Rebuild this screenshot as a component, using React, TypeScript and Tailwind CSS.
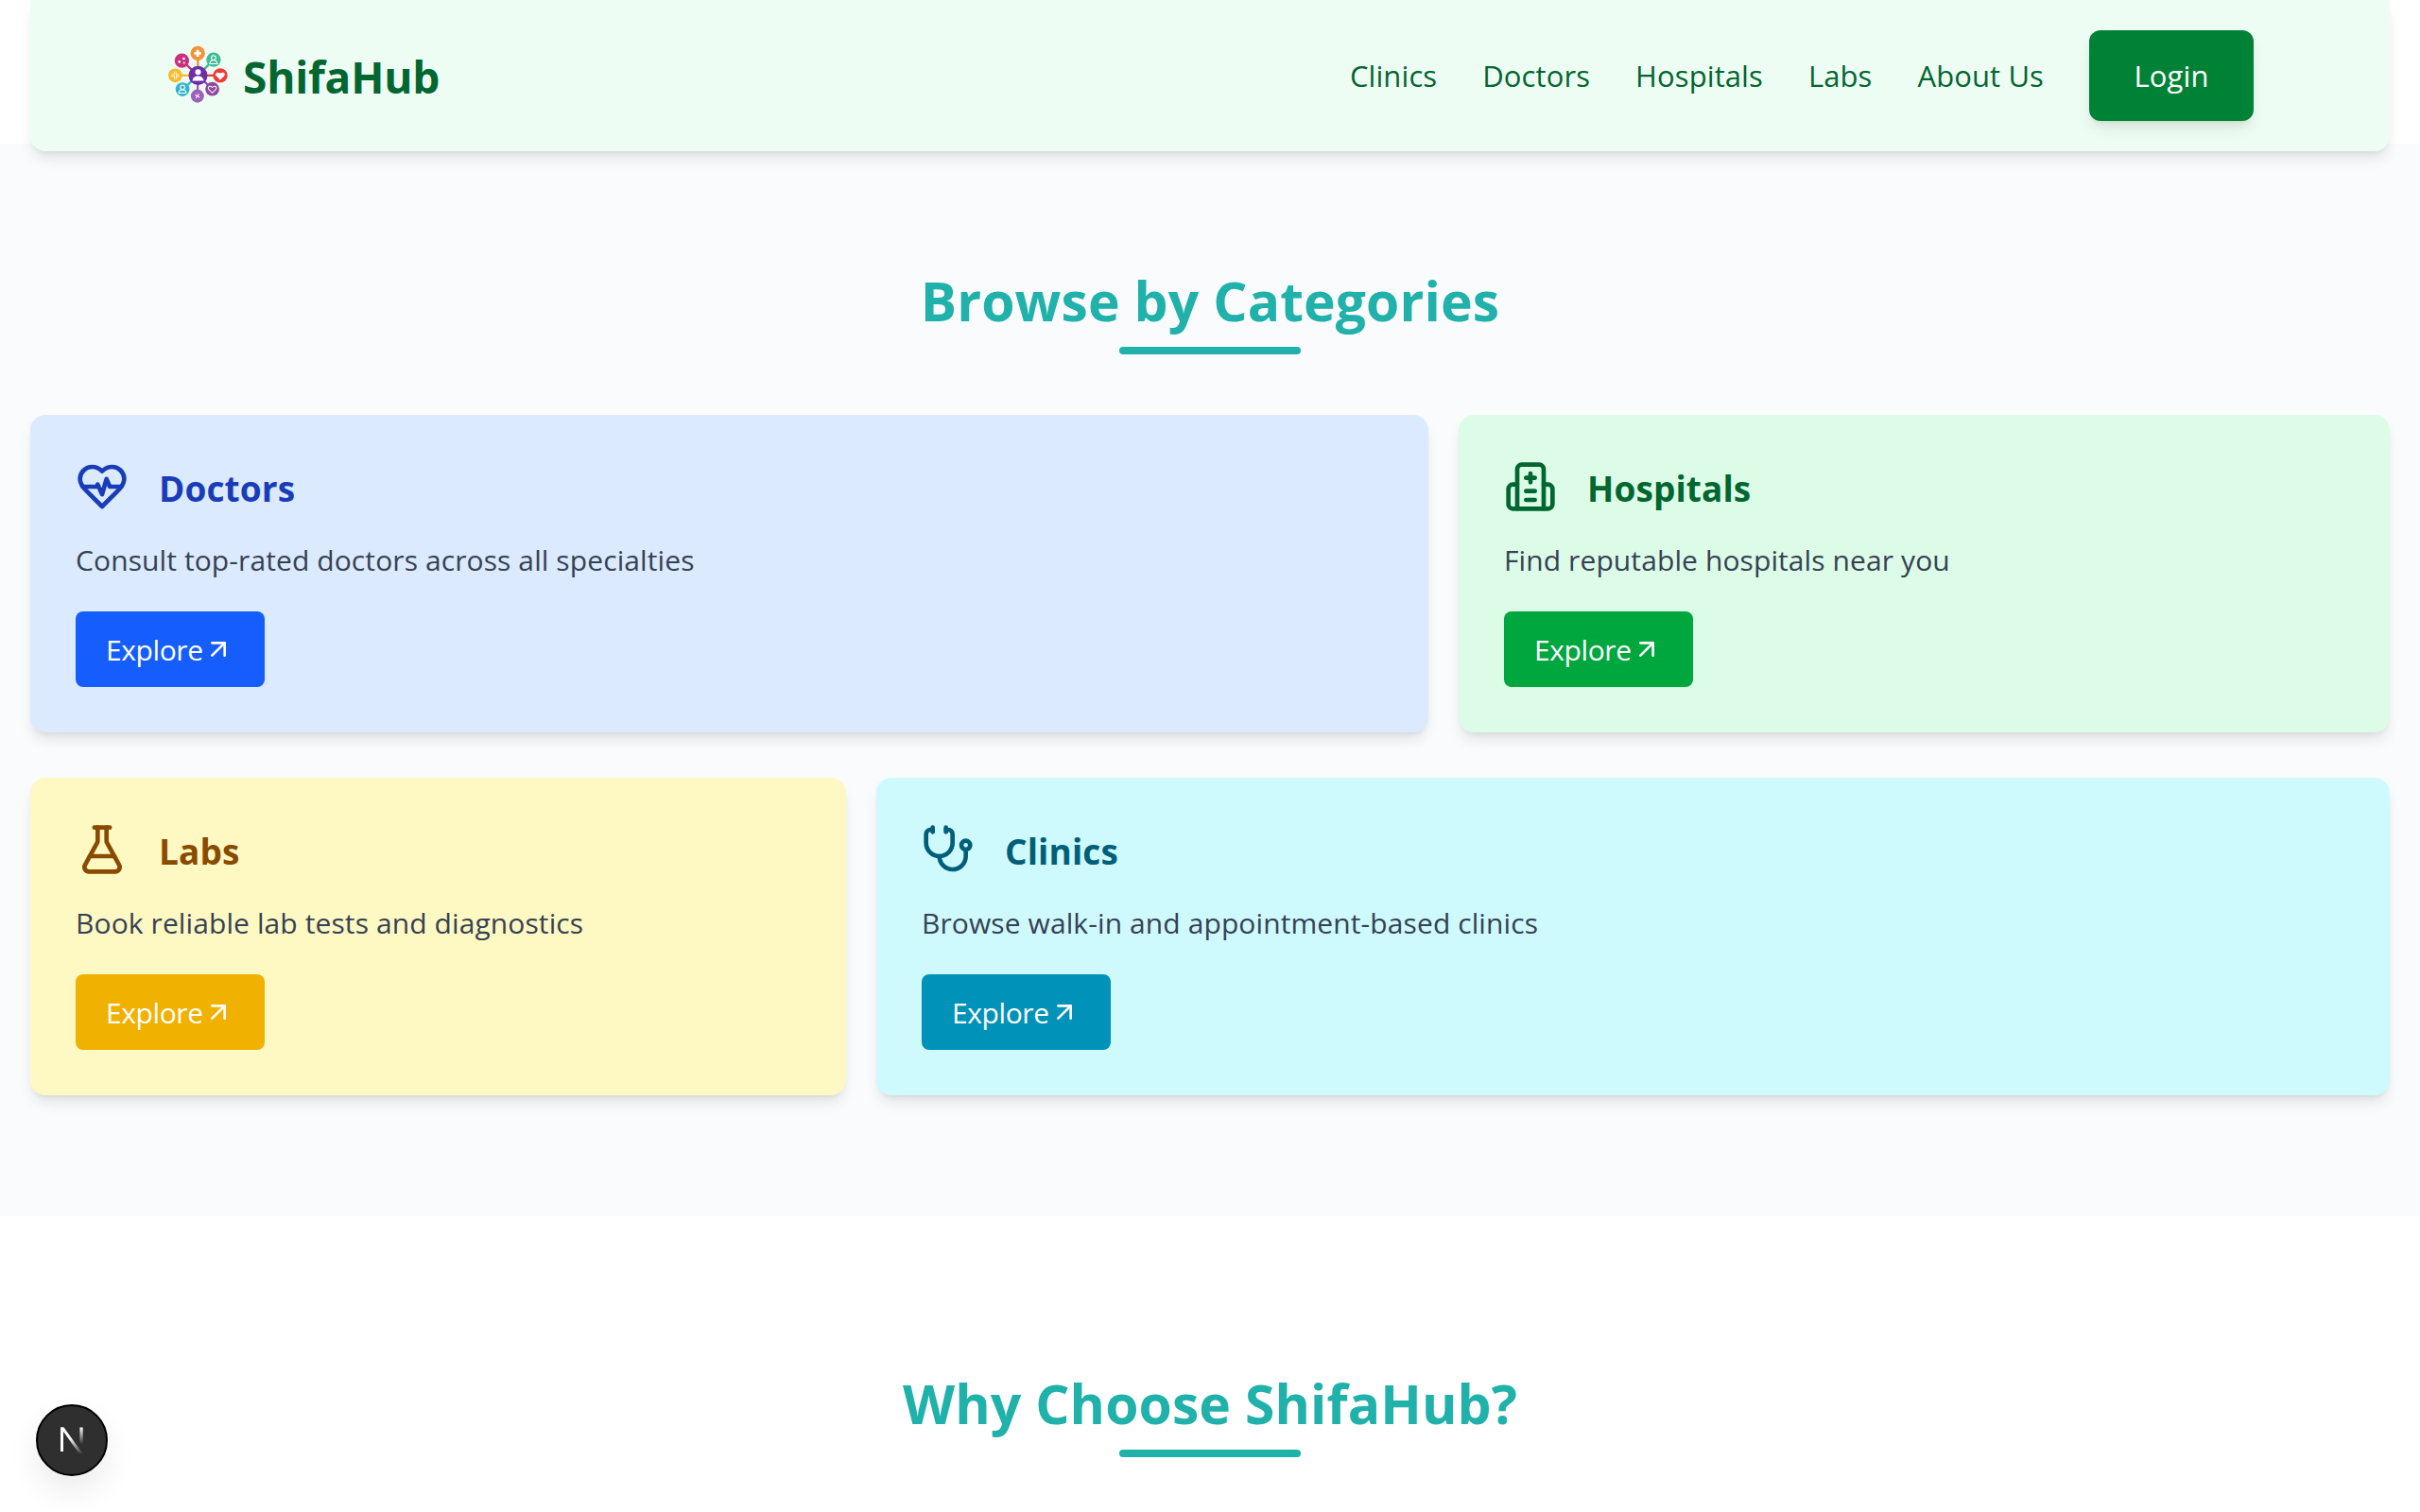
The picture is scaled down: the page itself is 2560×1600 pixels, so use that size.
import { ArrowUpRight, FlaskConical, Stethoscope } from "lucide-react";
import type { ReactNode } from "react";

const font = "font-['Open_Sans','Noto_Sans',sans-serif]";

function Logo() {
  const petals = [
    { x: 174, y: 83, r: 23, c: "#f2933a" },
    { x: 224, y: 103, r: 23, c: "#3dbd94" },
    { x: 245, y: 153, r: 23, c: "#ee3b3b" },
    { x: 220, y: 196, r: 22, c: "#8e4a9e" },
    { x: 173, y: 218, r: 21, c: "#9b62b8" },
    { x: 126, y: 197, r: 22, c: "#35b3cb" },
    { x: 103, y: 153, r: 22, c: "#fbb92e" },
    { x: 124, y: 106, r: 23, c: "#c9317f" },
  ];
  return (
    <svg viewBox="75 55 200 200" className="w-[67px] h-[67px] shrink-0">
      {petals.map((p) => (
        <g key={p.c}>
          <line x1="175" y1="153" x2={p.x} y2={p.y} stroke={p.c} strokeWidth="7" />
          <circle cx={p.x} cy={p.y} r={p.r} fill={p.c} />
        </g>
      ))}
      <circle cx="175" cy="153" r="30" fill="#6f2da8" />
      <circle cx="175" cy="142" r="9" fill="#fff" />
      <path d="M157 170c2-12 10-15 18-15s16 3 18 15z" fill="#fff" />
      <path d="M174 72v22M163 83h22" stroke="#fff" strokeWidth="8" />
      <circle cx="224" cy="97" r="7" fill="none" stroke="#fff" strokeWidth="3" />
      <path d="M212 116c1-9 6-11 12-11s11 2 12 11z" fill="none" stroke="#fff" strokeWidth="3" />
      <path d="M245 167l-13-13c-6-8 6-15 13-7 7-8 19-1 13 7z" fill="#fff" />
      <path d="M220 208l-11-11c-6-8 5-14 11-6 6-8 17-2 11 6z" fill="none" stroke="#fff" strokeWidth="3" />
      <path d="M168 225l10-14M166 214l14 8" stroke="#fff" strokeWidth="3" />
      <circle cx="126" cy="190" r="7" fill="none" stroke="#fff" strokeWidth="3" />
      <path d="M114 209c1-9 6-11 12-11s11 2 12 11z" fill="none" stroke="#fff" strokeWidth="3" />
      <path d="M103 141v24M91 153h24" stroke="#fff" strokeWidth="8" />
      <path d="M103 141v24M91 153h24" stroke="#fbb92e" strokeWidth="3" />
      <circle cx="116" cy="110" r="4" fill="#fff" />
      <circle cx="130" cy="100" r="4" fill="#fff" />
      <circle cx="131" cy="113" r="3" fill="#fff" />
    </svg>
  );
}

function Icon({ children }: { children: ReactNode }) {
  return (
    <svg
      viewBox="0 0 24 24"
      width="56"
      height="56"
      fill="none"
      stroke="currentColor"
      strokeWidth="2"
      strokeLinecap="round"
      strokeLinejoin="round"
      className="shrink-0"
    >
      {children}
    </svg>
  );
}

function HospitalIcon() {
  return (
    <Icon>
      <path d="M6 22V4a2 2 0 0 1 2-2h8a2 2 0 0 1 2 2v18" />
      <path d="M6 11H4a2 2 0 0 0-2 2v7a2 2 0 0 0 2 2h16a2 2 0 0 0 2-2v-7a2 2 0 0 0-2-2h-2" />
      <path d="M12 6v4M10 8h4M10 14h4M10 18h4" />
    </Icon>
  );
}

function HeartIcon() {
  return (
    <Icon>
      <path d="M19 14c1.49-1.46 3-3.21 3-5.5A5.5 5.5 0 0 0 16.5 3c-1.76 0-3 .5-4.5 2-1.5-1.5-2.74-2-4.5-2A5.5 5.5 0 0 0 2 8.5c0 2.3 1.5 4.05 3 5.5l7 7Z" />
      <path d="M3.22 12H9.5l.5-1 2 4.5 2-7 1.5 3.5h5.27" />
    </Icon>
  );
}

function Heading({ children, className }: { children: ReactNode; className: string }) {
  return (
    <div className={`flex flex-col items-center ${className}`}>
      <h2 className="text-[57px] leading-[60px] font-bold text-[#20b2aa] tracking-[0.1px]">{children}</h2>
      <div className="w-48 h-2 mt-[19px] rounded-full bg-[#20b2aa]" />
    </div>
  );
}

function Card({
  icon,
  title,
  text,
  bg,
  fg,
  btn,
}: {
  icon: ReactNode;
  title: string;
  text: string;
  bg: string;
  fg: string;
  btn: string;
}) {
  return (
    <div className={`${bg} rounded-2xl shadow-lg p-12 h-[336px]`}>
      <div className={`flex items-center gap-8 h-14 ${fg}`}>
        {icon}
        <h3 className="text-[37px] leading-[56px] pt-[4px] font-bold tracking-[0.1px]">{title}</h3>
      </div>
      <p className="text-[30px] leading-[48px] text-[#364153] mt-[26px] tracking-[0.1px]">{text}</p>
      <button className={`${btn} mt-[30px] flex items-center h-20 w-[200px] pl-8 rounded-lg text-[30px] text-white tracking-[-0.4px]`}>
        Explore
        <ArrowUpRight size={32} />
      </button>
    </div>
  );
}

export default function App() {
  return (
    <div className={`${font} bg-white min-h-[1600px] overflow-hidden`}>
      <header className="relative z-10 mx-8 h-40 bg-[#eefdf4] rounded-b-2xl shadow-lg flex items-center justify-between px-36">
        <div className="flex items-center gap-[14px]">
          <Logo />
          <span className="text-[46px] font-bold text-[#016630] tracking-[-0.2px] pt-[3px]">ShifaHub</span>
        </div>
        <nav className="flex items-center gap-12 text-[31px] font-medium text-[#016630] tracking-[0.1px]">
          <a>Clinics</a>
          <a>Doctors</a>
          <a>Hospitals</a>
          <a>Labs</a>
          <a>About Us</a>
          <button className="h-24 w-[174px] rounded-xl bg-[#008236] text-white shadow-lg">Login</button>
        </nav>
      </header>
      <section className="bg-[#fafbfd] -mt-2 pt-[136px] pb-32">
        <Heading className="">Browse by Categories</Heading>
        <div className="mx-8 mt-16 flex flex-col gap-12">
          <div className="grid grid-cols-[1479px_985px] gap-8">
            <Card
              icon={<HeartIcon />}
              title="Doctors"
              text="Consult top-rated doctors across all specialties"
              bg="bg-[#dbeafe]"
              fg="text-[#193cb8]"
              btn="bg-[#155dfc]"
            />
            <Card
              icon={<HospitalIcon />}
              title="Hospitals"
              text="Find reputable hospitals near you"
              bg="bg-[#dcfce7]"
              fg="text-[#016630]"
              btn="bg-[#00a63e]"
            />
          </div>
          <div className="grid grid-cols-[863px_1601px] gap-8">
            <Card
              icon={<FlaskConical size={56} />}
              title="Labs"
              text="Book reliable lab tests and diagnostics"
              bg="bg-[#fef9c2]"
              fg="text-[#894b00]"
              btn="bg-[#f0b100]"
            />
            <Card
              icon={<Stethoscope size={56} />}
              title="Clinics"
              text="Browse walk-in and appointment-based clinics"
              bg="bg-[#cefafe]"
              fg="text-[#005f78]"
              btn="bg-[#0092b8]"
            />
          </div>
        </div>
      </section>
      <Heading className="mt-[168px]">Why Choose ShifaHub?</Heading>
      <div className="fixed left-[38px] top-[1486px] w-[76px] h-[76px] rounded-full bg-[#2f2f2f] border-2 border-black shadow-[0_16px_32px_rgba(0,0,0,0.08)] flex items-center justify-center">
        <svg viewBox="0 0 24 24" className="w-9 h-9">
          <defs>
            <linearGradient id="nfade" x1="0" y1="0" x2="0" y2="1">
              <stop offset="0.4" stopColor="#fff" />
              <stop offset="1" stopColor="#fff" stopOpacity="0" />
            </linearGradient>
            <linearGradient id="nfade2" x1="0" y1="0" x2="0" y2="1">
              <stop offset="0" stopColor="#fff" />
              <stop offset="0.7" stopColor="#fff" stopOpacity="0" />
            </linearGradient>
          </defs>
          <path d="M4 3h2v17H4z" fill="#fff" />
          <path d="M4 3h2.4L20 22h-2.6z" fill="url(#nfade)" />
          <rect x="17.6" y="3" width="2.2" height="17" fill="url(#nfade2)" />
        </svg>
      </div>
    </div>
  );
}
